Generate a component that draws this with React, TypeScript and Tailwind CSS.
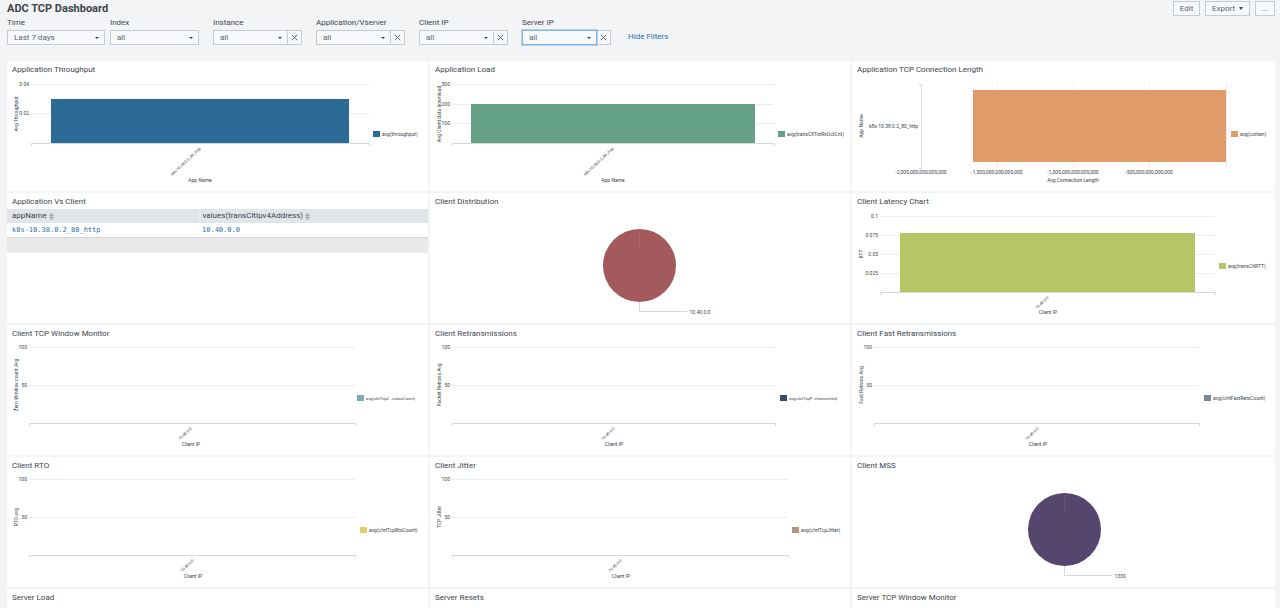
import React, { useId } from "react";

type Legend = { x: number; label: string; small?: boolean };
type Tick = { at: number; label?: string };

type ColumnSpec = {
  axis: [number, number];
  baseline: number;
  ticks: Tick[];
  color: string;
  bar?: { x: number; y: number; width: number };
  legend: Legend;
  yTitle: string;
  yCenter: number;
  xTitle: string;
  xCenter: number;
  category: string;
};

const INK = "#3c444d";
const GRID = "#ebedef";
const AXIS = "#d5d9dd";

function ChartFrame({ label, children }: { label: string; children: React.ReactNode }) {
  return (
    <svg
      viewBox="0 0 420 114"
      preserveAspectRatio="xMinYMid meet"
      className="block h-[114px] w-full"
      role="img"
      aria-label={label}
    >
      {children}
    </svg>
  );
}

function LegendMark({ legend, color }: { legend: Legend; color: string }) {
  return (
    <g>
      <rect x={legend.x} y={54} width={7} height={6} fill={color} />
      <text x={legend.x + 9} y={59} className={legend.small ? "text-[4px]" : "text-[5px]"} fill={INK}>
        {legend.label}
      </text>
    </g>
  );
}

function AxisTitle({ y, children }: { y: number; children: string }) {
  return (
    <text transform={`translate(11 ${y}) rotate(-90)`} textAnchor="middle" className="text-[5px]" fill={INK}>
      {children}
    </text>
  );
}

function ColumnChart({ title, spec }: { title: string; spec: ColumnSpec }) {
  const [x0, x1] = spec.axis;
  return (
    <ChartFrame label={title}>
      {spec.ticks.map((t) => (
        <g key={t.at}>
          <line x1={x0} x2={x1} y1={t.at + 0.5} y2={t.at + 0.5} stroke={GRID} />
          <text x={x0 - 2} y={t.at + 2} textAnchor="end" className="text-[5px]" fill={INK}>
            {t.label}
          </text>
        </g>
      ))}
      <path
        d={`M${x0 + 0.5} ${spec.baseline + 3}V${spec.baseline + 0.5}H${x1 + 0.5}V${spec.baseline + 3}`}
        fill="none"
        stroke={AXIS}
      />
      {spec.bar && (
        <rect
          x={spec.bar.x}
          y={spec.bar.y}
          width={spec.bar.width}
          height={spec.baseline - spec.bar.y}
          fill={spec.color}
        />
      )}
      <text
        transform={`translate(${spec.xCenter + 1} ${spec.baseline + 6}) rotate(-43)`}
        textAnchor="end"
        className="text-[4px]"
        fill={INK}
      >
        {spec.category}
      </text>
      <text x={spec.xCenter} y={105} textAnchor="middle" className="text-[5px]" fill={INK}>
        {spec.xTitle}
      </text>
      <AxisTitle y={spec.yCenter}>{spec.yTitle}</AxisTitle>
      <LegendMark legend={spec.legend} color={spec.color} />
    </ChartFrame>
  );
}

function ConnectionLengthChart({ title }: { title: string }) {
  const ticks: Tick[] = [
    { at: 69, label: "-2,000,000,000,000,000" },
    { at: 145, label: "-1,500,000,000,000,000" },
    { at: 221, label: "-1,000,000,000,000,000" },
    { at: 297, label: "-500,000,000,000,000" },
    { at: 374 },
  ];
  return (
    <ChartFrame label={title}>
      {ticks.map((t, i) => (
        <g key={t.at}>
          <line x1={t.at + 0.5} x2={t.at + 0.5} y1={7} y2={91} stroke={i === 0 ? AXIS : GRID} />
          <text x={t.at} y={97} textAnchor="middle" className="text-[5px]" fill={INK}>
            {t.label}
          </text>
        </g>
      ))}
      <path d="M67 7.5H70M67 91.5H70" stroke={AXIS} />
      <rect x={121} y={13} width={253} height={72} fill="#e09b69" />
      <text x={66} y={51} textAnchor="end" className="text-[5px]" fill={INK}>
        k8s-10.38.0.2_80_http
      </text>
      <text x={221} y={105} textAnchor="middle" className="text-[5px]" fill={INK}>
        Avg Connection Length
      </text>
      <AxisTitle y={49}>App Name</AxisTitle>
      <LegendMark legend={{ x: 379, label: "avg(conlen)" }} color="#e09b69" />
    </ChartFrame>
  );
}

function PieChart({ title, color, label, cx }: { title: string; color: string; label: string; cx: number }) {
  return (
    <ChartFrame label={title}>
      <circle cx={cx} cy={56.5} r={36.5} fill={color} />
      <path d={`M${cx} 20V40`} stroke="#ffffff" strokeOpacity={0.08} />
      <path d={`M${cx} 93V102.5H${cx + 48}`} fill="none" stroke={AXIS} />
      <text x={cx + 50} y={105} className="text-[5px]" fill={INK}>
        {label}
      </text>
    </ChartFrame>
  );
}

function SortMark() {
  return (
    <svg viewBox="0 0 5 7" className="h-[7px] w-[5px]" fill="none" stroke="#6b7480" strokeWidth="0.6" aria-hidden="true">
      <path d="M0.8 2.7L2.5 0.6L4.2 2.7ZM0.8 4.3L2.5 6.4L4.2 4.3Z" />
    </svg>
  );
}

function ClientTable() {
  return (
    <div className="border-b border-[#efefef] bg-[#e9e9e9] pb-[14px]">
      <table className="w-full table-fixed border-collapse text-left">
        <thead>
          <tr className="h-[14px] bg-[#e1e4e9]">
            <th className="w-[191px] border-r border-[#f2f4f5] px-[5px] py-0 font-normal">
              <button type="button" className="flex items-center gap-[2px] text-[8px] leading-[12px]">
                appName <SortMark />
              </button>
            </th>
            <th className="px-[4px] py-0 font-normal">
              <button type="button" className="flex items-center gap-[2px] text-[8px] leading-[12px]">
                values(transCltIpv4Address) <SortMark />
              </button>
            </th>
          </tr>
        </thead>
        <tbody>
          <tr className="h-[14px] border-b border-[#d3d5d7] bg-white font-['DejaVu_Sans_Mono',monospace] text-[7px] leading-[12px] text-[#1f6fb0]">
            <td className="px-[5px] pt-px pb-0">
              <a href="#app">k8s-10.38.0.2_80_http</a>
            </td>
            <td className="px-[4px] pt-px pb-0">
              <a href="#client">10.40.0.0</a>
            </td>
          </tr>
        </tbody>
      </table>
    </div>
  );
}

function idle(
  end: number,
  color: string,
  legend: Legend,
  yTitle: string,
  xCenter: number,
): ColumnSpec {
  return {
    axis: [22, end],
    baseline: 82,
    ticks: [
      { at: 6, label: "100" },
      { at: 44, label: "50" },
    ],
    color,
    legend,
    yTitle,
    yCenter: 44,
    xTitle: "Client IP",
    xCenter,
    category: "10.40.0.0",
  };
}

const throughput: ColumnSpec = {
  axis: [24, 362],
  baseline: 66,
  ticks: [
    { at: 7, label: "0.04" },
    { at: 36, label: "0.02" },
  ],
  color: "#2b6b96",
  bar: { x: 44, y: 22, width: 298 },
  legend: { x: 366, label: "avg(throughput)" },
  yTitle: "Avg Throughput",
  yCenter: 37,
  xTitle: "App Name",
  xCenter: 193,
  category: "k8s-10.38.0.2_80_http",
};

const load: ColumnSpec = {
  axis: [22, 344],
  baseline: 66,
  ticks: [
    { at: 7, label: "300" },
    { at: 27, label: "200" },
    { at: 46, label: "100" },
  ],
  color: "#65a186",
  bar: { x: 41, y: 27, width: 284 },
  legend: { x: 348, label: "avg(transCltTotRxOctCnt)" },
  yTitle: "Avg Client data download",
  yCenter: 37,
  xTitle: "App Name",
  xCenter: 183,
  category: "k8s-10.38.0.2_80_http",
};

const latency: ColumnSpec = {
  axis: [28, 363],
  baseline: 83,
  ticks: [
    { at: 7, label: "0.1" },
    { at: 26, label: "0.075" },
    { at: 45, label: "0.05" },
    { at: 64, label: "0.025" },
  ],
  color: "#b8c567",
  bar: { x: 48, y: 24, width: 295 },
  legend: { x: 367, label: "avg(transCltRTT)" },
  yTitle: "RTT",
  yCenter: 45,
  xTitle: "Client IP",
  xCenter: 196,
  category: "10.40.0.0",
};

const columns = (title: string, spec: ColumnSpec) => ({ title, body: <ColumnChart title={title} spec={spec} /> });

const panels: { title: string; body?: React.ReactNode }[] = [
  columns("Application Throughput", throughput),
  columns("Application Load", load),
  {
    title: "Application TCP Connection Length",
    body: <ConnectionLengthChart title="Application TCP Connection Length" />,
  },
  { title: "Application Vs Client", body: <ClientTable /> },
  {
    title: "Client Distribution",
    body: <PieChart title="Client Distribution" color="#a35a5c" label="10.40.0.0" cx={209.5} />,
  },
  columns("Client Latency Chart", latency),
  columns(
    "Client TCP Window Monitor",
    idle(348, "#78aeac", { x: 350, label: "avg(clntTcpZ...indowCount)", small: true }, "Zero Window count Avg", 184),
  ),
  columns(
    "Client Retransmissions",
    idle(345, "#324c6a", { x: 350, label: "avg(clntTcpP...etransmited)", small: true }, "Packet Retrans Avg", 184),
  ),
  columns(
    "Client Fast Retransmissions",
    idle(347, "#7a8a93", { x: 352, label: "avg(clntFastRetxCount)" }, "Fast Retrans Avg", 186),
  ),
  columns("Client RTO", idle(348, "#e1ce64", { x: 353, label: "avg(clntTcpRtoCount)" }, "RTO avg", 186)),
  columns("Client Jitter", idle(358, "#b19678", { x: 362, label: "avg(clntTcpJitter)" }, "TCP Jitter", 191)),
  { title: "Client MSS", body: <PieChart title="Client MSS" color="#55466e" label="1330" cx={212.5} /> },
  { title: "Server Load" },
  { title: "Server Resets" },
  { title: "Server TCP Window Monitor" },
];

function Panel({ title, children }: { title: string; children?: React.ReactNode }) {
  return (
    <section className="h-[130px] bg-white">
      <h2 className="px-[5px] pt-[2px] pb-px text-[8px] leading-[13px]">{title}</h2>
      {children}
    </section>
  );
}

type FilterProps = { label: string; value: string; wide?: boolean; clearable?: boolean; focused?: boolean };

function Filter({ label, value, wide, clearable, focused }: FilterProps) {
  const id = useId();
  const width = wide ? "w-[98px]" : clearable ? "w-[75px]" : "w-[89px]";
  const border = focused ? "border-[#7fb2e0] ring-1 ring-[#b5d3ee]" : "border-[#c3cbd4]";
  return (
    <div className="w-[103px] shrink-0">
      <label htmlFor={id} className="block text-[8px] leading-[14px]">
        {label}
      </label>
      <div className="flex">
        <div className={`relative ${width}`}>
          <select
            id={id}
            defaultValue={value}
            className={`block h-[15px] w-full appearance-none border bg-[#f7f8fa] px-[6px] text-[8px] leading-[12px] text-[#5c6773] outline-none ${border}`}
          >
            <option>{value}</option>
          </select>
          <svg viewBox="0 0 4 2" className="pointer-events-none absolute top-[7px] right-[6px] h-[2px] w-[4px]" aria-hidden="true">
            <path d="M0 0H4L2 2Z" fill={INK} />
          </svg>
        </div>
        {clearable && (
          <button
            type="button"
            aria-label={`Clear ${label}`}
            className="-ml-px flex h-[15px] w-[15px] items-center justify-center border border-[#c3cbd4] bg-[#f7f8fa]"
          >
            <svg viewBox="0 0 7 7" className="h-[7px] w-[7px]" aria-hidden="true">
              <path d="M0.8 0.8L6.2 6.2M6.2 0.8L0.8 6.2" stroke="#5c6773" />
            </svg>
          </button>
        )}
      </div>
    </div>
  );
}

const actionButton =
  "flex h-[15px] items-center justify-center gap-[4px] border border-[#c3cbd4] bg-[#f7f8fa] text-[8px] leading-[12px] text-[#5c6773]";

export default function App() {
  return (
    <div className="h-screen overflow-hidden bg-[#f2f4f5] pr-[5px] pl-[7px] font-['Roboto',sans-serif] text-[#3c444d]">
      <header className="flex items-start justify-between pt-px">
        <h1 className="text-[11px] leading-[15px] font-bold">ADC TCP Dashboard</h1>
        <div className="flex gap-[5px]">
          <button type="button" className={`${actionButton} w-[27px]`}>
            Edit
          </button>
          <button type="button" className={`${actionButton} w-[45px]`}>
            Export
            <svg viewBox="0 0 4 3" className="h-[3px] w-[4px]" aria-hidden="true">
              <path d="M0 0H4L2 3Z" fill={INK} />
            </svg>
          </button>
          <button type="button" aria-label="More actions" className={`${actionButton} w-[20px]`}>
            ...
          </button>
        </div>
      </header>
      <div className="flex items-end pb-4">
        <Filter label="Time" value="Last 7 days" wide />
        <Filter label="Index" value="all" />
        <Filter label="Instance" value="all" clearable />
        <Filter label="Application/Vserver" value="all" clearable />
        <Filter label="Client IP" value="all" clearable />
        <Filter label="Server IP" value="all" clearable focused />
        <a href="#filters" className="ml-[3px] text-[8px] leading-[17px] text-[#1f6fb0]">
          Hide Filters
        </a>
      </div>
      <main className="grid grid-cols-[421fr_420fr_423fr] gap-[2px]">
        {panels.map((p) => (
          <Panel key={p.title} title={p.title}>
            {p.body}
          </Panel>
        ))}
      </main>
    </div>
  );
}
